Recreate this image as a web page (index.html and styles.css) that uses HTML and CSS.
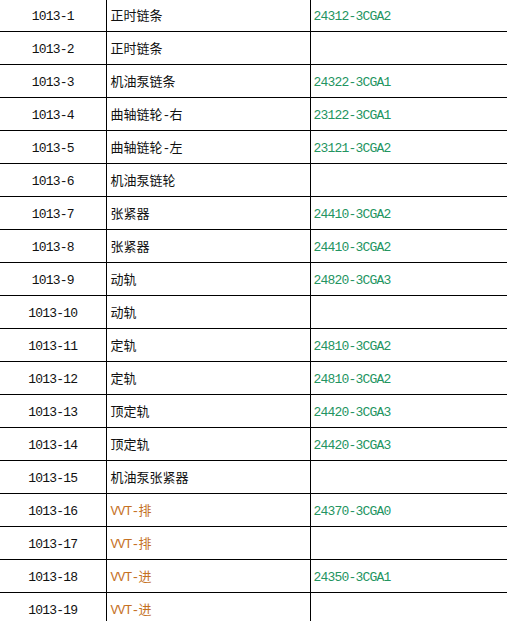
FILE: index.html
```html
<!DOCTYPE html>
<html>
<head>
<meta charset="utf-8">
<link rel="stylesheet" href="styles.css">
</head>
<body>
<div class="sheet">
<table class="grid">
<colgroup><col class="c1"><col class="c2"><col class="c3"></colgroup>
<tbody>
<tr><td class="num">1013-1</td><td class="name">正时链条</td><td class="code">24312-3CGA2</td></tr>
<tr><td class="num">1013-2</td><td class="name">正时链条</td><td class="code"></td></tr>
<tr><td class="num">1013-3</td><td class="name">机油泵链条</td><td class="code">24322-3CGA1</td></tr>
<tr><td class="num">1013-4</td><td class="name">曲轴链轮<span class="lat">-</span>右</td><td class="code">23122-3CGA1</td></tr>
<tr><td class="num">1013-5</td><td class="name">曲轴链轮<span class="lat">-</span>左</td><td class="code">23121-3CGA2</td></tr>
<tr><td class="num">1013-6</td><td class="name">机油泵链轮</td><td class="code"></td></tr>
<tr><td class="num">1013-7</td><td class="name">张紧器</td><td class="code">24410-3CGA2</td></tr>
<tr><td class="num">1013-8</td><td class="name">张紧器</td><td class="code">24410-3CGA2</td></tr>
<tr><td class="num">1013-9</td><td class="name">动轨</td><td class="code">24820-3CGA3</td></tr>
<tr><td class="num">1013-10</td><td class="name">动轨</td><td class="code"></td></tr>
<tr><td class="num">1013-11</td><td class="name">定轨</td><td class="code">24810-3CGA2</td></tr>
<tr><td class="num">1013-12</td><td class="name">定轨</td><td class="code">24810-3CGA2</td></tr>
<tr><td class="num">1013-13</td><td class="name">顶定轨</td><td class="code">24420-3CGA3</td></tr>
<tr><td class="num">1013-14</td><td class="name">顶定轨</td><td class="code">24420-3CGA3</td></tr>
<tr><td class="num">1013-15</td><td class="name">机油泵张紧器</td><td class="code"></td></tr>
<tr><td class="num">1013-16</td><td class="name vvt"><span class="lat">VVT-</span>排</td><td class="code">24370-3CGA0</td></tr>
<tr><td class="num">1013-17</td><td class="name vvt"><span class="lat">VVT-</span>排</td><td class="code"></td></tr>
<tr><td class="num">1013-18</td><td class="name vvt"><span class="lat">VVT-</span>进</td><td class="code">24350-3CGA1</td></tr>
<tr><td class="num">1013-19</td><td class="name vvt"><span class="lat">VVT-</span>进</td><td class="code"></td></tr>
</tbody>
</table>
</div>
</body>
</html>
```
FILE: styles.css
```css
html, body {
  margin: 0;
  padding: 0;
  background: #fff;
}
body {
  overflow: hidden;
  width: 507px;
  height: 621px;
}
.sheet {
  overflow: hidden;
  width: 507px;
  height: 621px;
}
.grid {
  border-collapse: collapse;
  table-layout: fixed;
  width: 620px;
  margin-top: -1px;
  font-family: "Noto Sans CJK SC", "Noto Sans", sans-serif;
  font-size: 13px;
  color: #111;
}
.c1 { width: 106px; }
.c2 { width: 204px; }
.c3 { width: 310px; }
.grid td {
  height: 32px;
  padding: 0;
  border-right: 1px solid #000;
  border-bottom: 1px solid #000;
  box-sizing: content-box;
  line-height: 18px;
  white-space: nowrap;
  vertical-align: middle;
}
.grid td.num,
.grid td.code,
.lat {
  font-family: "Liberation Mono", "DejaVu Sans Mono", monospace;
  font-size: 13px;
  letter-spacing: -0.8px;
}
.grid td.num,
.grid td.code {
  height: 29px;
  padding-top: 3px;
}
.lat {
  line-height: 1;
}
.grid td.num {
  text-align: center;
}
.grid td.name {
  padding-left: 4px;
}
.grid td.code {
  padding-left: 3px;
  color: #239461;
}
.grid td.vvt {
  color: #c5711f;
}
```
